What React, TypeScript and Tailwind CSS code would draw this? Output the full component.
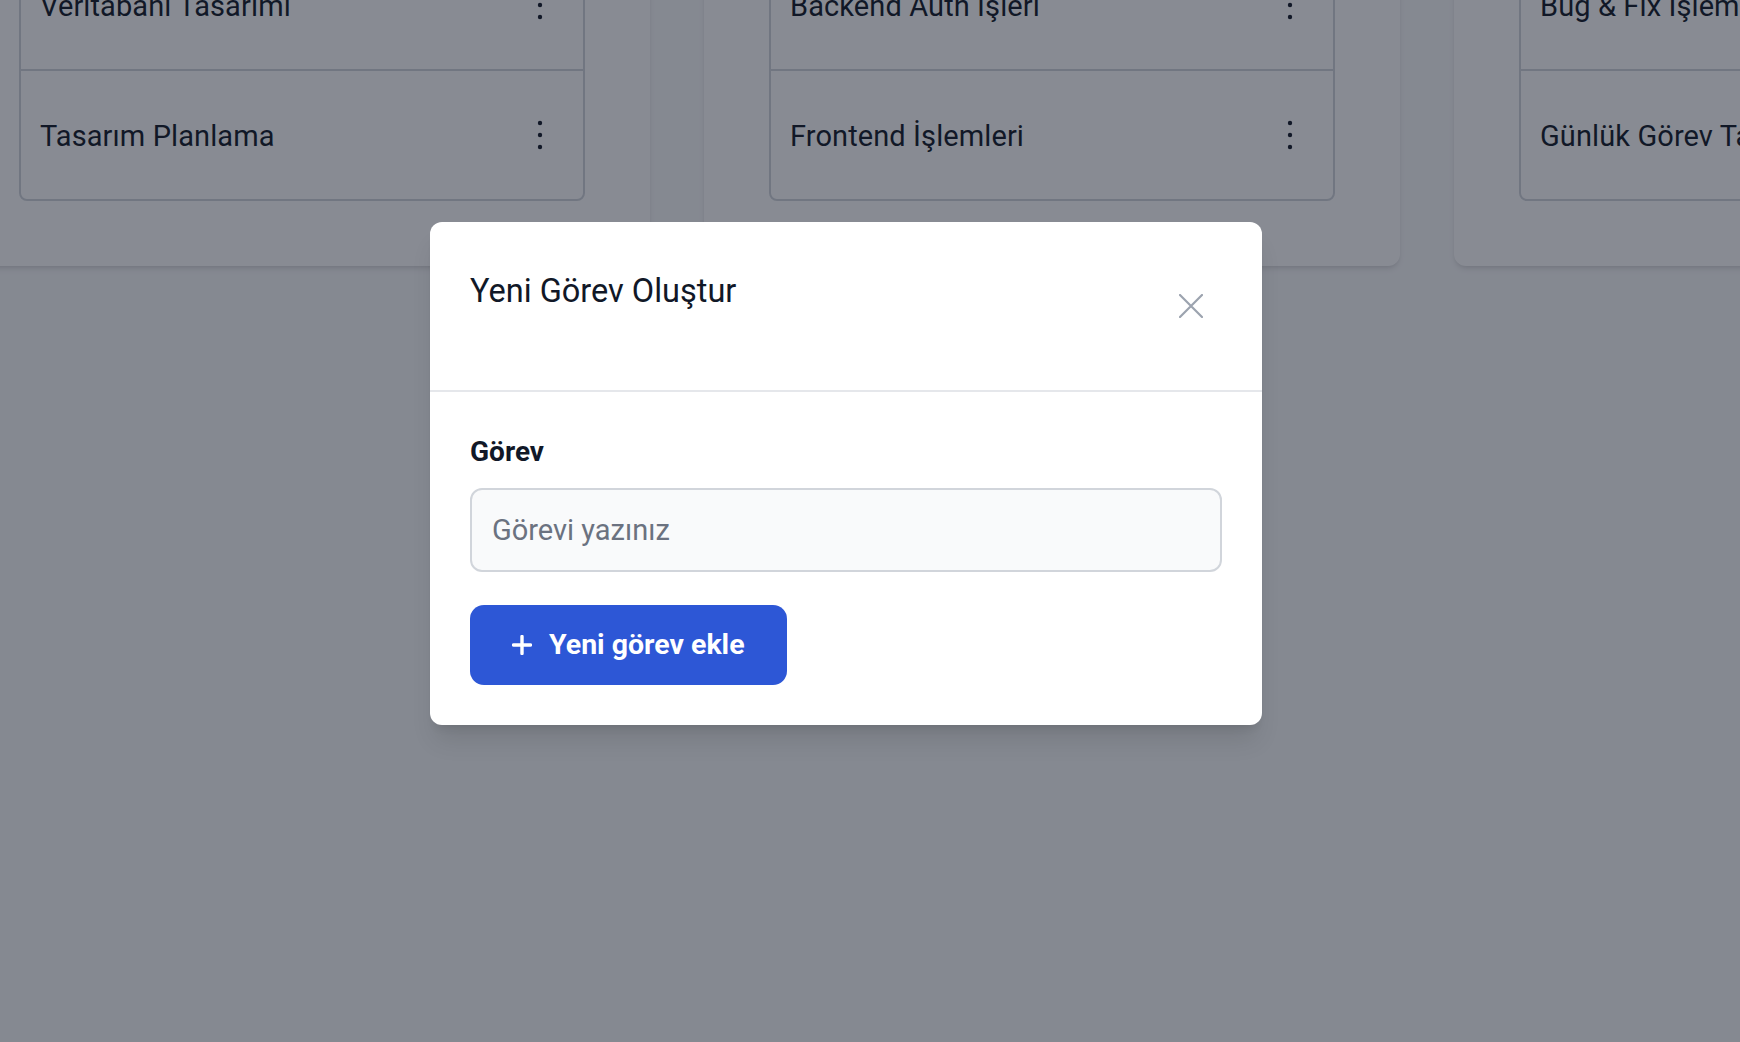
import React from "react";

const columns = [
  ["Veritabanı Tasarımı", "Tasarım Planlama"],
  ["Backend Auth İşleri", "Frontend İşlemleri"],
  ["Bug & Fix İşlemleri", "Günlük Görev Takibi"],
];

function Dots() {
  return (
    <svg width="8" height="30" viewBox="0 0 8 30" className="shrink-0">
      <circle cx="4" cy="3" r="2.2" fill="#111827" />
      <circle cx="4" cy="15" r="2.2" fill="#111827" />
      <circle cx="4" cy="27" r="2.2" fill="#111827" />
    </svg>
  );
}

export default function App() {
  return (
    <div className="relative h-[1042px] w-[1740px] overflow-hidden bg-[#f9fafb] font-['Roboto',sans-serif]">
      <div className="-ml-[46px] -mt-[126px] flex gap-[54px]">
        {columns.map((col, i) => (
          <div
            key={i}
            className="w-[696px] shrink-0 rounded-[12px] bg-white px-[65px] pb-[65px] pt-[65px] shadow-md"
          >
            <div className="rounded-[8px] border-2 border-[#d1d5db]">
              {col.map((t, j) => (
                <div
                  key={j}
                  className={
                    j === 0
                      ? "flex h-[128px] items-center justify-between pl-[19px] pr-[39px]"
                      : "flex h-[130px] items-center justify-between border-t-2 border-[#d1d5db] pl-[19px] pr-[39px]"
                  }
                >
                  <span className="pt-[4px] whitespace-nowrap text-[29px] tracking-[0.1px] text-[#111827]">{t}</span>
                  <Dots />
                </div>
              ))}
            </div>
          </div>
        ))}
      </div>

      <div className="absolute inset-0 bg-[#111827]/50" />

      <div className="absolute left-[430px] top-[222px] w-[832px] rounded-[12px] bg-white shadow-xl">
        <div className="flex h-[170px] items-start justify-between border-b-2 border-[#e5e7eb] pl-[40px] pr-[59px] pt-[50px]">
          <h3 className="text-[32.5px] font-normal leading-[38px] text-[#111827]">Yeni Görev Oluştur</h3>
          <svg width="24" height="24" viewBox="0 0 24 24" className="mt-[22px]">
            <path d="M1 1 L23 23 M23 1 L1 23" stroke="#9ca3af" strokeWidth="2.2" strokeLinecap="round" />
          </svg>
        </div>
        <div className="px-[40px] pb-[40px] pt-[44px]">
          <label className="block text-[28px] font-bold leading-[32px] text-[#111827]">Görev</label>
          <input
            className="mt-[20px] block h-[84px] w-full rounded-[12px] border-2 border-[#d1d5db] bg-[#f9fafb] px-[20px] text-[29px] text-[#111827] outline-none placeholder:text-[#6b7280]"
            placeholder="Görevi yazınız"
          />
          <button className="mt-[33px] flex h-[80px] items-center gap-[17px] rounded-[14px] bg-[#2d57d6] px-[42px] text-[28.5px] font-bold text-white">
            <svg width="20" height="20" viewBox="0 0 20 20">
              <path d="M10 1.5 V18.5 M1.5 10 H18.5" stroke="white" strokeWidth="3.4" strokeLinecap="round" />
            </svg>
            <span>Yeni görev ekle</span>
          </button>
        </div>
      </div>
    </div>
  );
}
